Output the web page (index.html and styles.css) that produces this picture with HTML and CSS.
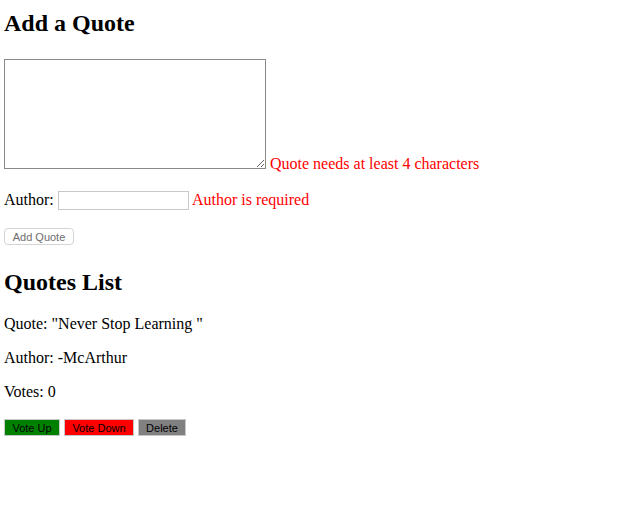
FILE: index.html
```html
<!DOCTYPE html>
<html>
<head>
<meta charset="utf-8">
<title>Quotes</title>
<link rel="stylesheet" href="styles.css">
</head>
<body>
<h2 class="title">Add a Quote</h2>
<form class="quote-form">
  <div class="row row-quote"><textarea class="quote-input"></textarea> <span class="error">Quote needs at least 4 characters</span></div>
  <p class="row row-author">Author: <input class="author-input" type="text"> <span class="error">Author is required</span></p>
  <button class="add-btn" type="button" disabled>Add Quote</button>
</form>
<h2 class="title list-title">Quotes List</h2>
<p class="line">Quote: "Never Stop Learning "</p>
<p class="line">Author: -McArthur</p>
<p class="line">Votes: 0</p>
<div class="actions"><button class="act up" type="button">Vote Up</button> <button class="act down" type="button">Vote Down</button> <button class="act del" type="button">Delete</button></div>
</body>
</html>
```
FILE: styles.css
```css
html, body {
  background: #fff;
}
body {
  margin: 0 4px;
  font-family: "Liberation Serif", "Times New Roman", serif;
  font-size: 16px;
  color: #000;
}
.title {
  font-size: 24px;
  font-weight: bold;
  margin: 10px 0 22px;
}
.quote-form {
  margin: 0;
}
.row-quote {
  margin: 0;
}
.quote-input {
  width: 262px;
  height: 110px;
  box-sizing: border-box;
  border: 1px solid #8a8a8a;
  margin: 0;
  padding: 2px;
  vertical-align: baseline;
  font-family: "Liberation Mono", monospace;
  font-size: 13px;
}
.error {
  color: #ff0000;
}
.row-author {
  margin: 18px 0 18px;
}
.author-input {
  width: 131px;
  height: 19px;
  box-sizing: border-box;
  border: 1px solid #c8c8c8;
  margin: 0;
  padding: 1px 2px;
  font-size: 13px;
}
.add-btn {
  display: block;
  width: 70px;
  height: 17px;
  box-sizing: border-box;
  padding: 0;
  margin: 0;
  border: 1px solid #d4d4d4;
  border-radius: 4px;
  background: #fff;
  color: #6e6e6e;
  font-family: "Liberation Sans", Arial, sans-serif;
  font-size: 11px;
}
.list-title {
  margin-top: 24px;
  margin-bottom: 19px;
}
.line {
  margin: 16px 0;
}
.actions {
  font-size: 0;
  display: flex;
  gap: 4px;
  padding-top: 2px;
}
.act {
  height: 17px;
  box-sizing: border-box;
  padding: 0;
  margin: 0;
  border: 1px solid #c8c8c8;
  color: #000;
  font-family: "Liberation Sans", Arial, sans-serif;
  font-size: 11px;
}
.up {
  width: 56px;
  background: #008000;
}
.down {
  width: 70px;
  background: #ff0000;
}
.del {
  width: 48px;
  background: #808080;
}
```
